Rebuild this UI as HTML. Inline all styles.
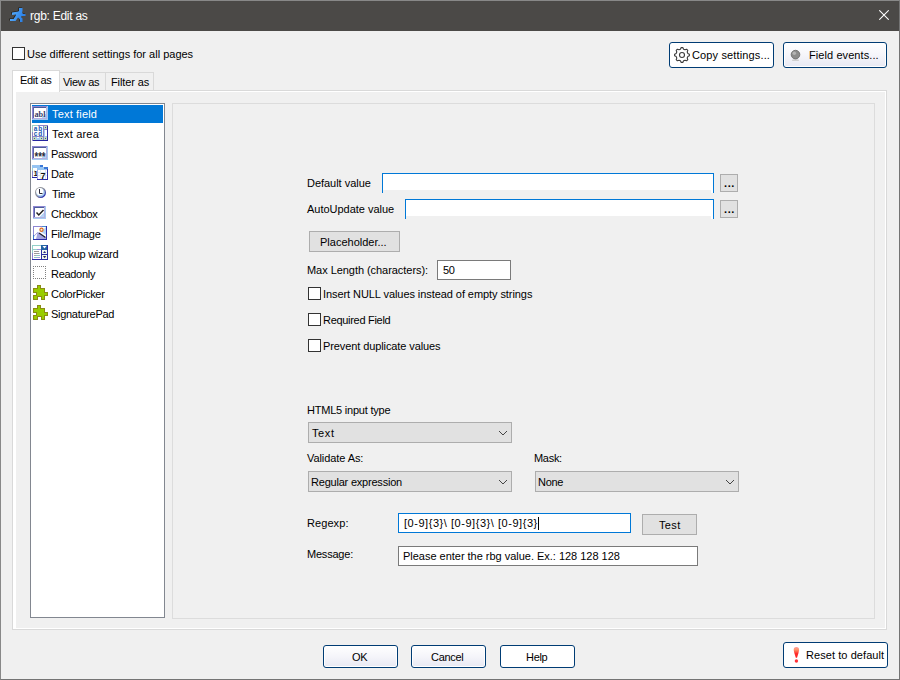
<!DOCTYPE html>
<html lang="en">
<head>
<meta charset="utf-8">
<title>rgb: Edit as</title>
<style>
*{box-sizing:border-box;margin:0;padding:0}
html,body{width:900px;height:680px;overflow:hidden;background:#f0f0f0}
body{font-family:"Liberation Sans",sans-serif;font-size:11px;color:#000;line-height:13px}
#win{position:absolute;left:0;top:0;width:900px;height:680px;background:#f0f0f0;overflow:hidden}
#win div,#win span,#win svg,#win button,#win label,#win ul,#win li,#win header,#win h1,#win section,#win nav,#win footer{position:absolute}
button,h1{font:inherit;color:inherit;text-align:left;overflow:visible;-webkit-appearance:none;appearance:none;cursor:default}
ul{list-style:none}
.t{white-space:pre}
#frame{border:1px solid;border-color:#888 #747474 #747474 #888;pointer-events:none}
#titlebar{background:#4b4947;color:#fff}
.cb{border:1px solid #333;background:#fff}
.xbtn{border:1px solid #003c74;border-radius:3px;background:linear-gradient(#fff,#f5f5fa 50%,#e8e9f3);box-shadow:inset 0 0 0 1px #fff}
.xbtn.w{background:#fff}
.gbtn,.sel{border:1px solid #adadad;background:#e1e1e1;border-radius:0}
.inp{background:#fff;border:1px solid #7a7a7a}
.inp.f{border-color:#0078d7}
.inp.cut{border-bottom:none}
.inp.cut i{position:absolute;left:0;top:16px;height:3px;background:#f0f0f0}
.tab{border:1px solid #d9d9d9;border-bottom:none;background:#f0f0f0}
.tab.on{background:#fff}
#pane{border:1px solid #d9d9d9;background:#fff}
#page{background:#f0f0f0}
#types{border:1px solid #828790;background:#fff}
#types li.sel-item{background:#0078d7;color:#fff}
#opts{border:1px solid #dcdcdc}
.caret{background:#000}
</style>
</head>
<body>
<div id="win">
  <header id="titlebar" style="left:0px;top:0px;width:900px;height:31px;">
    <svg style="left:8px;top:5px" width="20" height="20" viewBox="0 0 20 20" aria-hidden="true"><defs><linearGradient id="rg" x1="0" y1="0" x2="1" y2="0.3"><stop offset="0" stop-color="#5cb2ff"/><stop offset="1" stop-color="#2b7fe4"/></linearGradient></defs><path transform="translate(-8.6,-5.6)" d="M19 8 H22.500 V11 L22 12.500 L23 14 H25.500 V16 H21.500 L21 17 L22.500 18.500 V22 H20 V19.500 L18 17.500 L15.500 21 H10 V19 H13.500 L15.500 16 L16 14.500 L12 15 V12.500 L18 11.500 L19 11 Z" fill="#1c1815"/><path transform="translate(-8,-5)" d="M19 8 H22.500 V11 L22 12.500 L23 14 H25.500 V16 H21.500 L21 17 L22.500 18.500 V22 H20 V19.500 L18 17.500 L15.500 21 H10 V19 H13.500 L15.500 16 L16 14.500 L12 15 V12.500 L18 11.500 L19 11 Z" fill="url(#rg)"/></svg>
    <h1 class="t" style="left:30px;top:8px;font-size:12px;line-height:16px;letter-spacing:-0.26px;color:#fff;">rgb: Edit as</h1>
    <svg style="left:879px;top:10px" width="10" height="10" viewBox="0 0 10 10" aria-hidden="true"><path d="M0.300 0.300 L9.700 9.700 M9.700 0.300 L0.300 9.700" stroke="#fff" stroke-width="1.050" fill="none"/></svg>
  </header>
  <div class="cb" style="left:12px;top:47px;width:13px;height:13px;"></div>
  <label class="t" style="left:27px;top:48px;">Use different settings for all pages</label>
  <button class="xbtn w" type="button" style="left:669px;top:42px;width:105px;height:26px;">
    <svg style="left:4px;top:4px" width="16" height="16" viewBox="0 0 16 16" aria-hidden="true"><g fill="none" stroke="#3c3c3c" stroke-width="1.1" stroke-linejoin="round"><circle cx="8" cy="8" r="2.5"/><path d="M6.4 2.2 L7.2 0.6 L8.8 0.6 L9.6 2.2 L11.0 2.8 L12.6 2.2 L13.8 3.4 L13.2 5.0 L13.8 6.4 L15.4 7.2 L15.4 8.8 L13.8 9.6 L13.2 11.0 L13.8 12.6 L12.6 13.8 L11.0 13.2 L9.6 13.8 L8.8 15.4 L7.2 15.4 L6.4 13.8 L5.0 13.2 L3.4 13.8 L2.2 12.6 L2.8 11.0 L2.2 9.6 L0.6 8.8 L0.6 7.2 L2.2 6.4 L2.8 5.0 L2.2 3.4 L3.4 2.2 L5.0 2.8Z"/></g></svg>
    <span class="t" style="left:22px;top:6px;letter-spacing:0.14px;">Copy settings...</span>
  </button>
  <button class="xbtn" type="button" style="left:783px;top:42px;width:104px;height:26px;">
    <svg style="left:6px;top:6px" width="12" height="13" viewBox="0 0 12 13" aria-hidden="true"><ellipse cx="5.5" cy="11.2" rx="3.6" ry="0.9" fill="#d0d0d0"/><circle cx="5.5" cy="5.6" r="4.3" fill="#8c8c8c" stroke="#6e6e6e" stroke-width="0.9"/><circle cx="4.3" cy="4.2" r="1.8" fill="#b4b4b4"/></svg>
    <span class="t" style="left:25px;top:6px;letter-spacing:0.08px;">Field events...</span>
  </button>
  <div id="pane" style="left:12px;top:90px;width:875px;height:540px;">
    <div id="page" style="left:3px;top:1px;width:869px;height:536px;">
      <ul id="types" style="left:14px;top:11px;width:135px;height:515px;">
        <li class="sel-item" style="left:1px;top:1px;width:131px;height:18px;">
          <svg style="left:0px;top:0px" width="16" height="16" viewBox="0 0 16 16" shape-rendering="crispEdges" aria-hidden="true"><rect x="0" y="1" width="16" height="14" fill="#a6caf0"/><rect x="0" y="1" width="15" height="1" fill="#8e86d2"/><rect x="0" y="1" width="1" height="13" fill="#8e86d2"/><rect x="1" y="2" width="14" height="12" fill="#b4b0e0"/><rect x="1" y="2" width="13" height="1" fill="#4a5c98"/><rect x="1" y="2" width="1" height="11" fill="#5a64a8"/><rect x="2" y="3" width="12" height="10" fill="#fff"/><path d="M14 8V13H9Z" fill="#b4d4f6"/><text x="8" y="11.500" text-anchor="middle" font-family="Liberation Serif,serif" font-size="8.500" font-weight="bold" fill="#3a3a6a" textLength="11" lengthAdjust="spacingAndGlyphs">abl</text></svg>
          <span class="t" style="left:20px;top:3px;letter-spacing:0.17px;">Text field</span>
        </li>
        <li style="left:1px;top:21px;width:131px;height:18px;">
          <svg style="left:0px;top:0px" width="16" height="16" viewBox="0 0 16 16" shape-rendering="crispEdges" aria-hidden="true"><rect x="0" y="0" width="16" height="16" fill="#8c84c8"/><rect x="0" y="0" width="6" height="1" fill="#9cd0c8"/><rect x="0" y="0" width="1" height="7" fill="#9cd0c8"/><rect x="15" y="1" width="1" height="15" fill="#2c2ca0"/><rect x="1" y="15" width="15" height="1" fill="#2424a0"/><rect x="1" y="1" width="10" height="10" fill="#fff"/><rect x="12" y="1" width="3" height="3" fill="#c4dcb8"/><rect x="13" y="2" width="1" height="1" fill="#3458b4"/><rect x="12" y="5" width="3" height="7" fill="#a6caf0"/><rect x="13" y="5" width="2" height="6" fill="#fff"/><rect x="1" y="12" width="3" height="3" fill="#c4dcb8"/><rect x="2" y="13" width="1" height="1" fill="#3458b4"/><rect x="4" y="12" width="4" height="3" fill="#a6caf0"/><rect x="5" y="12" width="2" height="1" fill="#fff"/><rect x="8" y="12" width="3" height="3" fill="#c4dcb8"/><rect x="9" y="13" width="1" height="1" fill="#3458b4"/><rect x="12" y="12" width="3" height="3" fill="#c4dcb8"/><rect x="13" y="13" width="1" height="1" fill="#3458b4"/><text x="1.800" y="6" font-family="Liberation Sans,sans-serif" font-size="6.500" font-weight="bold" fill="#2058b0" textLength="8.500" lengthAdjust="spacing">ab</text><text x="1.800" y="10.500" font-family="Liberation Sans,sans-serif" font-size="6.500" font-weight="bold" fill="#2058b0" textLength="8.500" lengthAdjust="spacing">cd</text></svg>
          <span class="t" style="left:20px;top:3px;letter-spacing:0.19px;">Text area</span>
        </li>
        <li style="left:1px;top:41px;width:131px;height:18px;">
          <svg style="left:0px;top:0px" width="16" height="16" viewBox="0 0 16 16" shape-rendering="crispEdges" aria-hidden="true"><rect x="0" y="1" width="16" height="14" fill="#a6caf0"/><rect x="0" y="1" width="15" height="1" fill="#8e86d2"/><rect x="0" y="1" width="1" height="13" fill="#8e86d2"/><rect x="1" y="2" width="14" height="12" fill="#b4b0e0"/><rect x="1" y="2" width="13" height="1" fill="#4a5c98"/><rect x="1" y="2" width="1" height="11" fill="#5a64a8"/><rect x="2" y="3" width="12" height="10" fill="#fff"/><path d="M14 8V13H9Z" fill="#b4d4f6"/><text x="8" y="15.500" text-anchor="middle" font-family="Liberation Sans,sans-serif" font-size="12" font-weight="bold" fill="#2a2a3a" textLength="11" lengthAdjust="spacingAndGlyphs">***</text></svg>
          <span class="t" style="left:19px;top:3px;letter-spacing:-0.30px;">Password</span>
        </li>
        <li style="left:1px;top:61px;width:131px;height:18px;">
          <svg style="left:0px;top:0px" width="16" height="16" viewBox="0 0 16 16" shape-rendering="crispEdges" aria-hidden="true"><rect x="0" y="0" width="11" height="13" fill="#fff"/><rect x="0" y="0" width="11" height="3" fill="#96c4f2"/><rect x="8" y="0" width="3" height="2" fill="#3a78d8"/><rect x="0" y="3" width="1" height="3" fill="#9cd0d0"/><rect x="0" y="6" width="1" height="7" fill="#8a8ad4"/><rect x="0" y="12" width="11" height="1" fill="#2c2ca8"/><rect x="2" y="5" width="1" height="1" fill="#cfe6e0"/><rect x="2" y="8" width="1" height="1" fill="#cfe6e0"/><rect x="2" y="10" width="1" height="1" fill="#d8d4f0"/><text x="1.500" y="10.500" font-family="Liberation Sans,sans-serif" font-size="8" font-weight="bold" fill="#111">1</text><rect x="5" y="2" width="11" height="13" fill="#fff"/><rect x="5" y="2" width="11" height="3" fill="#96c4f2"/><rect x="12" y="2" width="4" height="2" fill="#3a78d8"/><rect x="5" y="5" width="1" height="9" fill="#a4a4e4"/><rect x="15" y="4" width="1" height="11" fill="#2c2ca8"/><rect x="5" y="14" width="11" height="1" fill="#2c2ca8"/><rect x="6" y="7" width="9" height="1" fill="#dcecf4"/><rect x="6" y="10" width="9" height="1" fill="#dcecf4"/><rect x="8" y="5" width="1" height="9" fill="#dcecf4"/><rect x="13" y="5" width="1" height="9" fill="#e0dcf4"/><text x="8.500" y="13.500" font-family="Liberation Sans,sans-serif" font-size="9" font-weight="bold" fill="#111">7</text></svg>
          <span class="t" style="left:19px;top:3px;letter-spacing:-0.10px;">Date</span>
        </li>
        <li style="left:1px;top:81px;width:131px;height:18px;">
          <svg style="left:0px;top:0px" width="16" height="16" viewBox="0 0 16 16" aria-hidden="true"><defs><linearGradient id="cg" x1="0.150" y1="0.150" x2="0.850" y2="0.850"><stop offset="0" stop-color="#9a9a9a"/><stop offset="0.500" stop-color="#8a8a98"/><stop offset="1" stop-color="#2c34b0"/></linearGradient></defs><circle cx="8.500" cy="7.500" r="4.900" fill="#a6caf0" stroke="url(#cg)" stroke-width="1.200"/><circle cx="7.800" cy="6.600" r="3.600" fill="#fff"/><path d="M7.500 4V8.500H10.500" stroke="#2a2a3a" stroke-width="1" fill="none"/></svg>
          <span class="t" style="left:20px;top:3px;letter-spacing:-0.30px;">Time</span>
        </li>
        <li style="left:1px;top:101px;width:131px;height:18px;">
          <svg style="left:0px;top:0px" width="16" height="16" viewBox="0 0 16 16" shape-rendering="crispEdges" aria-hidden="true"><rect x="1" y="1" width="13" height="13" fill="#a6caf0"/><rect x="1" y="1" width="12" height="1" fill="#8e86d2"/><rect x="1" y="1" width="1" height="12" fill="#8e86d2"/><rect x="2" y="2" width="11" height="11" fill="#b4b0e0"/><rect x="2" y="2" width="10" height="1" fill="#4a5c98"/><rect x="2" y="2" width="1" height="10" fill="#5a64a8"/><rect x="3" y="3" width="9" height="9" fill="#fff"/><path d="M12 7V12H7Z" fill="#b4d4f6"/><path d="M4.500 7.500 L6.800 10 L11.500 5" stroke="#222" stroke-width="1.500" fill="none" shape-rendering="auto"/></svg>
          <span class="t" style="left:19px;top:3px;letter-spacing:-0.30px;">Checkbox</span>
        </li>
        <li style="left:1px;top:121px;width:131px;height:18px;">
          <svg style="left:0px;top:0px" width="16" height="16" viewBox="0 0 16 16" shape-rendering="crispEdges" aria-hidden="true"><rect x="1" y="1" width="14" height="14" fill="#8e86d2"/><rect x="10" y="1" width="5" height="1" fill="#4a8ad0"/><rect x="1" y="10" width="1" height="5" fill="#3a7ac8"/><rect x="14" y="1" width="1" height="14" fill="#2c2ca8"/><rect x="1" y="14" width="14" height="1" fill="#2c2ca8"/><rect x="2" y="2" width="12" height="12" fill="#fff"/><path d="M14 2V10L9 7Z" fill="#b4d4f6" shape-rendering="auto"/><path d="M2 14 V11 L6 7 L9 9.500 L14 13 V14Z" fill="#a4a4e0" shape-rendering="auto"/><path d="M2 14 V11.500 L5.500 8 L4 14Z" fill="#fff" shape-rendering="auto"/><path d="M2 11 L6 7" stroke="#9c94dc" stroke-width="1" stroke-dasharray="1 0.600" shape-rendering="auto"/><path d="M7 8 L13.500 12.500" stroke="#1c2030" stroke-width="1.300" shape-rendering="auto"/><circle cx="9.500" cy="4.800" r="1.600" fill="#f4f4e0" stroke="#e06a20" stroke-width="1.200" shape-rendering="auto"/></svg>
          <span class="t" style="left:19px;top:3px;letter-spacing:-0.16px;">File/Image</span>
        </li>
        <li style="left:1px;top:141px;width:131px;height:18px;">
          <svg style="left:0px;top:0px" width="16" height="16" viewBox="0 0 16 16" shape-rendering="crispEdges" aria-hidden="true"><rect x="0" y="0" width="10" height="15" fill="#fff"/><rect x="0" y="0" width="10" height="1" fill="#92d0c8"/><rect x="0" y="1" width="1" height="7" fill="#92d0c8"/><rect x="0" y="8" width="1" height="7" fill="#8c84d0"/><rect x="0" y="14" width="10" height="1" fill="#2c2ca8"/><rect x="1" y="4" width="4" height="1" fill="#92d0c8"/><rect x="5" y="4" width="4" height="1" fill="#9c94d8"/><rect x="2" y="6" width="5" height="1" fill="#9a9a9a"/><rect x="2" y="8" width="5" height="1" fill="#9a9a9a"/><rect x="7" y="8" width="1" height="1" fill="#a6caf0"/><rect x="2" y="10" width="2" height="1" fill="#aaa"/><rect x="4" y="10" width="4" height="1" fill="#8cc8c8"/><rect x="2" y="12" width="3" height="1" fill="#8cc8c8"/><rect x="5" y="12" width="3" height="1" fill="#a8a0dc"/><rect x="9" y="0" width="7" height="15" fill="#2c2ca0"/><rect x="9" y="0" width="6" height="5" fill="#2262a4"/><path d="M10.500 1H14.500L12.500 3.500Z" fill="#fff" shape-rendering="auto"/><rect x="10" y="5" width="5" height="4" fill="#f4f8f0"/><path d="M11 8H14.200L12.600 6Z" fill="#2a2a80" shape-rendering="auto"/><rect x="10" y="10" width="5" height="4" fill="#f4f8f0"/><path d="M11 11H14.200L12.600 13.200Z" fill="#2a2a50" shape-rendering="auto"/></svg>
          <span class="t" style="left:19px;top:3px;letter-spacing:-0.28px;">Lookup wizard</span>
        </li>
        <li style="left:1px;top:161px;width:131px;height:18px;">
          <svg style="left:0px;top:0px" width="16" height="16" viewBox="0 0 16 16" shape-rendering="crispEdges" aria-hidden="true"><g stroke="#808080" stroke-width="1" stroke-dasharray="1 1" fill="none"><path d="M1 1.500H14"/><path d="M1 13.500H14"/><path d="M1.500 1V14"/><path d="M13.500 1V14"/></g></svg>
          <span class="t" style="left:19px;top:3px;letter-spacing:-0.30px;">Readonly</span>
        </li>
        <li style="left:1px;top:181px;width:131px;height:18px;">
          <svg style="left:0px;top:0px" width="16" height="16" viewBox="0 0 16 16" shape-rendering="crispEdges" aria-hidden="true"><path d="M1.500 3.500 H5.500 V0.500 H8.500 V3.500 H12.500 V7.500 H15.500 V10.500 H12.500 V14.500 H9.500 V11.500 H5.500 V14.500 H1.500 V10.500 H4.500 V7.500 H1.500 Z" fill="#99cc00" stroke="#8a8c14" stroke-width="1"/></svg>
          <span class="t" style="left:19px;top:3px;letter-spacing:-0.30px;">ColorPicker</span>
        </li>
        <li style="left:1px;top:201px;width:131px;height:18px;">
          <svg style="left:0px;top:0px" width="16" height="16" viewBox="0 0 16 16" shape-rendering="crispEdges" aria-hidden="true"><path d="M1.500 3.500 H5.500 V0.500 H8.500 V3.500 H12.500 V7.500 H15.500 V10.500 H12.500 V14.500 H9.500 V11.500 H5.500 V14.500 H1.500 V10.500 H4.500 V7.500 H1.500 Z" fill="#99cc00" stroke="#8a8c14" stroke-width="1"/></svg>
          <span class="t" style="left:19px;top:3px;letter-spacing:-0.30px;">SignaturePad</span>
        </li>
      </ul>
      <section id="opts" style="left:156px;top:11px;width:703px;height:516px;">
        <label class="t" style="left:134px;top:73px;letter-spacing:-0.03px;">Default value</label>
        <div class="inp f cut" style="left:209px;top:69px;width:332px;height:20px;"><i style="width:328px"></i></div>
        <button class="gbtn" type="button" style="left:547px;top:70px;width:18px;height:18px;">
          <span class="t" style="left:3px;top:2px;letter-spacing:0.60px;font-weight:bold;">...</span>
        </button>
        <label class="t" style="left:134px;top:99px;letter-spacing:-0.02px;">AutoUpdate value</label>
        <div class="inp f cut" style="left:232px;top:95px;width:309px;height:20px;"><i style="width:305px"></i></div>
        <button class="gbtn" type="button" style="left:547px;top:96px;width:18px;height:18px;">
          <span class="t" style="left:3px;top:2px;letter-spacing:0.60px;font-weight:bold;">...</span>
        </button>
        <button class="gbtn" type="button" style="left:136px;top:127px;width:91px;height:21px;">
          <span class="t" style="left:10px;top:4px;">Placeholder...</span>
        </button>
        <label class="t" style="left:134px;top:160px;letter-spacing:-0.05px;">Max Length (characters):</label>
        <div class="inp" style="left:264px;top:156px;width:74px;height:20px;">
          <span class="t" style="left:5px;top:3px;letter-spacing:-0.30px;">50</span>
        </div>
        <div class="cb" style="left:135px;top:183px;width:13px;height:13px;"></div>
        <label class="t" style="left:150px;top:184px;letter-spacing:-0.07px;">Insert NULL values instead of empty strings</label>
        <div class="cb" style="left:135px;top:209px;width:13px;height:13px;"></div>
        <label class="t" style="left:150px;top:210px;letter-spacing:-0.30px;">Required Field</label>
        <div class="cb" style="left:135px;top:235px;width:13px;height:13px;"></div>
        <label class="t" style="left:150px;top:236px;letter-spacing:-0.10px;">Prevent duplicate values</label>
        <label class="t" style="left:134px;top:300px;letter-spacing:-0.22px;">HTML5 input type</label>
        <div class="sel" style="left:135px;top:318px;width:204px;height:21px;">
          <span class="t" style="left:3px;top:4px;letter-spacing:0.60px;">Text</span>
          <svg style="left:189px;top:8px;overflow:visible" width="10" height="6" viewBox="0 0 10 6" aria-hidden="true"><path d="M1 0 L5 4 L9 0" stroke="#444" fill="none" stroke-width="1"/></svg>
        </div>
        <label class="t" style="left:134px;top:348px;letter-spacing:-0.08px;">Validate As:</label>
        <div class="sel" style="left:135px;top:367px;width:204px;height:21px;">
          <span class="t" style="left:2px;top:4px;letter-spacing:-0.21px;">Regular expression</span>
          <svg style="left:189px;top:8px;overflow:visible" width="10" height="6" viewBox="0 0 10 6" aria-hidden="true"><path d="M1 0 L5 4 L9 0" stroke="#444" fill="none" stroke-width="1"/></svg>
        </div>
        <label class="t" style="left:361px;top:348px;letter-spacing:-0.30px;">Mask:</label>
        <div class="sel" style="left:362px;top:367px;width:204px;height:21px;">
          <span class="t" style="left:2px;top:4px;letter-spacing:-0.30px;">None</span>
          <svg style="left:189px;top:8px;overflow:visible" width="10" height="6" viewBox="0 0 10 6" aria-hidden="true"><path d="M1 0 L5 4 L9 0" stroke="#444" fill="none" stroke-width="1"/></svg>
        </div>
        <label class="t" style="left:134px;top:413px;letter-spacing:0.08px;">Regexp:</label>
        <div class="inp f" style="left:225px;top:409px;width:233px;height:20px;">
          <span class="t" style="left:5px;top:3px;letter-spacing:0.54px;">[0-9]{3}\ [0-9]{3}\ [0-9]{3}</span>
          <div class="caret" style="left:139px;top:3px;width:1px;height:13px;"></div>
        </div>
        <button class="gbtn" type="button" style="left:469px;top:410px;width:55px;height:21px;">
          <span class="t" style="left:16px;top:4px;letter-spacing:0.37px;">Test</span>
        </button>
        <label class="t" style="left:134px;top:444px;letter-spacing:-0.21px;">Message:</label>
        <div class="inp" style="left:225px;top:442px;width:300px;height:20px;">
          <span class="t" style="left:4px;top:3px;letter-spacing:-0.02px;">Please enter the rbg value. Ex.: 128 128 128</span>
        </div>
      </section>
    </div>
  </div>
  <div class="tab on" style="left:12px;top:70px;width:48px;height:22px;">
    <span class="t" style="left:7px;top:3px;letter-spacing:-0.30px;">Edit as</span>
  </div>
  <div class="tab" style="left:59px;top:72px;width:47px;height:18px;">
    <span class="t" style="left:3px;top:3px;letter-spacing:-0.30px;">View as</span>
  </div>
  <div class="tab" style="left:105px;top:72px;width:49px;height:18px;">
    <span class="t" style="left:5px;top:3px;letter-spacing:-0.10px;">Filter as</span>
  </div>
  <button class="xbtn" type="button" style="left:323px;top:645px;width:75px;height:23px;">
    <span class="t" style="left:28px;top:5px;letter-spacing:-0.30px;">OK</span>
  </button>
  <button class="xbtn" type="button" style="left:411px;top:645px;width:75px;height:23px;">
    <span class="t" style="left:19px;top:5px;letter-spacing:-0.30px;">Cancel</span>
  </button>
  <button class="xbtn w" type="button" style="left:500px;top:645px;width:75px;height:23px;">
    <span class="t" style="left:25px;top:5px;letter-spacing:-0.30px;">Help</span>
  </button>
  <button class="xbtn w" type="button" style="left:783px;top:642px;width:105px;height:26px;">
    <svg style="left:8px;top:3px" width="10" height="18" viewBox="0 0 10 18" aria-hidden="true"><defs><linearGradient id="eg" x1="0" y1="0" x2="0" y2="1"><stop offset="0" stop-color="#ff9a9a"/><stop offset="0.250" stop-color="#ff9468"/><stop offset="0.600" stop-color="#ff2c2c"/><stop offset="1" stop-color="#ff2020"/></linearGradient></defs><path d="M1.700 4 Q1.600 1.100 4.400 1.100 Q7.200 1.100 7.100 4 Q6.800 7 5 11.800 L3.800 11.800 Q2 7 1.700 4Z" fill="url(#eg)"/><circle cx="4.400" cy="15" r="1.700" fill="#ff3038"/></svg>
    <span class="t" style="left:22px;top:6px;letter-spacing:0.07px;">Reset to default</span>
  </button>
  <div id="frame" style="left:0px;top:0px;width:900px;height:680px;"></div>
</div>
</body>
</html>
